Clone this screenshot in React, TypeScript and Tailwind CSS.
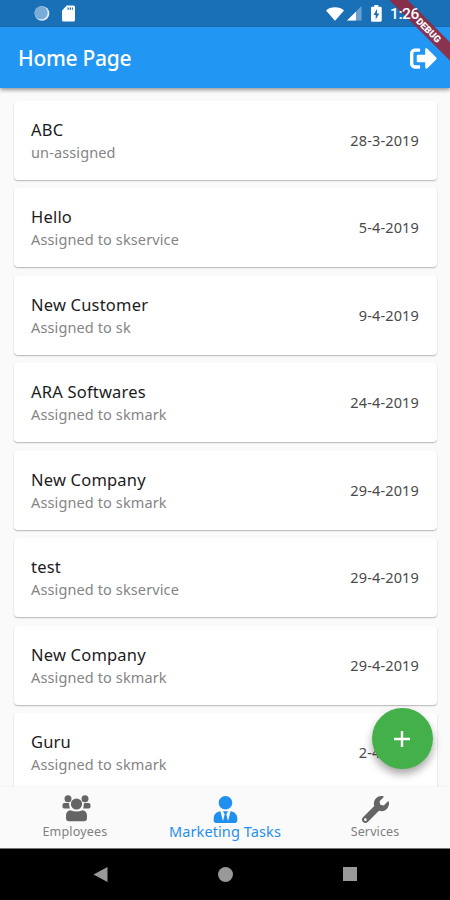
import { FaSignOutAlt, FaUserTie, FaWrench } from "react-icons/fa";

type Task = { name: string; status: string; date: string };

const TASKS: Task[] = [
  { name: "ABC", status: "un-assigned", date: "28-3-2019" },
  { name: "Hello", status: "Assigned to skservice", date: "5-4-2019" },
  { name: "New Customer", status: "Assigned to sk", date: "9-4-2019" },
  { name: "ARA Softwares", status: "Assigned to skmark", date: "24-4-2019" },
  { name: "New Company", status: "Assigned to skmark", date: "29-4-2019" },
  { name: "test", status: "Assigned to skservice", date: "29-4-2019" },
  { name: "New Company", status: "Assigned to skmark", date: "29-4-2019" },
  { name: "Guru", status: "Assigned to skmark", date: "2-4-2019" },
];

export default function App() {
  return (
    <div className="relative flex h-[900px] w-[450px] flex-col overflow-hidden bg-[#fafafa] font-['Noto_Sans',sans-serif]">
      <StatusBar />
      <header className="z-10 flex h-[61px] shrink-0 items-center justify-between bg-[#2196f3] pl-[18px] pr-[13px] text-white shadow-[0_2px_4px_rgba(0,0,0,0.4)]">
        <h1 className="pt-[2px] text-[21px] font-medium tracking-[-0.3px]">Home Page</h1>
        <FaSignOutAlt size={27} className="mt-px" />
      </header>

      <main className="flex min-h-0 flex-1 flex-col gap-[8.5px] overflow-hidden px-[13.5px] pt-[12.6px]">
        {TASKS.map((task, i) => (
          <TaskCard key={i} task={task} />
        ))}
      </main>

      <BottomNav />
      <SystemNav />

      <button className="absolute bottom-[131px] right-[17px] z-20 flex size-[61px] items-center justify-center rounded-full bg-[#43b04a] shadow-[0_5px_8px_rgba(0,0,0,0.35)]">
        <svg className="mr-px" width="16" height="16" viewBox="0 0 16 16" fill="#fff">
          <path d="M6.800 0h2.400v6.800H16v2.400H9.200V16H6.800V9.200H0V6.800h6.800z" />
        </svg>
      </button>
      <DebugBanner />
    </div>
  );
}

function StatusBar() {
  return (
    <div className="flex h-[27px] shrink-0 items-center bg-[#1a70b6] text-white">
      <svg className="ml-[34px]" width="16" height="17" viewBox="0 0 17 17">
        <circle cx="8.500" cy="8.500" r="7.800" fill="#dcebf7" />
        <circle cx="7.500" cy="7.700" r="7" fill="#79add8" />
      </svg>
      <svg className="ml-[12px]" width="13" height="17" viewBox="0 0 13 17">
        <path d="M4.800.5H11.500A1.500 1.500 0 0 1 13 2v13a1.500 1.500 0 0 1-1.500 1.500h-10A1.500 1.500 0 0 1 0 15V5.500z" fill="#fff" />
        <path d="M5.500 2.500h1.300v2.200H5.500zM7.700 2.500H9v2.200H7.700zM9.900 2.500h1v2.200h-1z" fill="#1a70b6" />
      </svg>
      <svg className="ml-[251px]" width="18" height="16" viewBox="0 0 20 16">
        <path d="M0 4.200C2.500 1.700 6 .5 10 .5s7.500 1.200 10 3.700L10 15.500z" fill="#fff" />
      </svg>
      <svg className="ml-[3px]" width="15" height="15" viewBox="0 0 16 16">
        <path d="M15.500 0v15.500H0z" fill="#fff" fillOpacity="0.35" />
        <path d="M9.500 6v9.500H0z" fill="#fff" />
      </svg>
      <svg className="ml-[9px]" width="11" height="17" viewBox="0 0 11 17">
        <path d="M3.300 0h4v1.800h2.200A1.200 1.200 0 0 1 10.700 3v12.600a1.200 1.200 0 0 1-1.200 1.200h-8.300A1.200 1.200 0 0 1 0 15.600V3a1.200 1.200 0 0 1 1.200-1.200h2.100z" fill="#fff" />
        <path d="M6 4 2.500 10h2.200v4.500l3.600-6H6z" fill="#1a70b6" />
      </svg>
      <span className="relative z-40 ml-[8px] pt-[2px] font-['Roboto',sans-serif] text-[15.5px] font-medium leading-none tracking-[-0.4px]">
        1:26
      </span>
    </div>
  );
}

function DebugBanner() {
  return (
    <div className="absolute right-0 top-0 z-30 size-[62px] overflow-hidden">
      <div className="absolute left-[-20px] top-[22.5px] flex h-[13px] w-[120px] rotate-45 items-center justify-center bg-[#93283e]/90 pl-[2px] font-['Roboto',sans-serif] text-[9.5px] font-black leading-none text-white">
        DEBUG
      </div>
    </div>
  );
}

function TaskCard({ task }: { task: Task }) {
  return (
    <div className="flex h-[79px] shrink-0 items-center justify-between rounded-[4px] bg-white px-[17.5px] shadow-[0_1px_1.5px_rgba(0,0,0,0.28)]">
      <div>
        <p className="text-[16.5px] leading-[23px] tracking-[0.2px] text-[#1c1c1c]">{task.name}</p>
        <p className="text-[14.5px] leading-[22px] tracking-[0.12px] text-[#858585]">{task.status}</p>
      </div>
      <span className="pt-px text-[14.5px] tracking-[0.15px] text-[#4a4a4a]">{task.date}</span>
    </div>
  );
}

function BottomNav() {
  return (
    <nav className="z-10 grid h-[61px] shrink-0 grid-cols-3 bg-[#fafafa] text-[#656565] shadow-[0_-1px_3px_rgba(0,0,0,0.03)]">
      <div className="flex flex-col items-center pt-[7px]">
        <UsersIcon />
        <span className="mt-[2px] text-[12.5px] leading-[16px] tracking-[0.2px] text-[#808080]">Employees</span>
      </div>
      <div className="flex flex-col items-center pt-[9px] text-[#1f8ff0]">
        <FaUserTie size={27} />
        <span className="text-[14.5px] leading-[16px] tracking-[0.1px]">Marketing Tasks</span>
      </div>
      <div className="flex flex-col items-center pt-[9px]">
        <FaWrench size={27} />
        <span className="mt-px text-[12.5px] leading-[16px] tracking-[0.1px] text-[#808080]">Services</span>
      </div>
    </nav>
  );
}

function UsersIcon() {
  return (
    <svg className="ml-[3px]" width="29" height="28" viewBox="0 0 29 28" fill="currentColor">
      <circle cx="6" cy="4.700" r="3.500" />
      <circle cx="23" cy="4.700" r="3.500" />
      <path d="M2.500 9H6c.8 0 1.200.4 1.200 1.100 0 1.700.2 2.700.7 4.400H2.300C1.200 14.500.5 13.900.5 12.800V11c0-1.200.8-2 2-2z" />
      <path d="M26.500 9H23c-.8 0-1.200.4-1.200 1.100 0 1.700-.2 2.700-.7 4.400h5.600c1.100 0 1.800-.6 1.800-1.700V11c0-1.200-.8-2-2-2z" />
      <circle cx="14.500" cy="10" r="5.600" />
      <path d="M8.500 16.200c3.600 1.600 8.400 1.600 12 0 2.900.3 4.500 2.500 4.500 5.300V24c0 2.100-1.100 3.200-3.200 3.200H7.200C5.100 27.200 4 26.100 4 24v-2.500c0-2.800 1.600-5 4.500-5.300z" />
    </svg>
  );
}

function SystemNav() {
  return (
    <div className="flex h-[52px] shrink-0 items-center justify-between border-t border-[#777] bg-black px-[93px] pb-px">
      <svg width="15" height="15" viewBox="0 0 15 15" fill="#999">
        <path d="M14.500 0v15L.5 7.500z" />
      </svg>
      <span className="size-[15px] rounded-full bg-[#999]" />
      <span className="size-[14px] bg-[#999]" />
    </div>
  );
}
